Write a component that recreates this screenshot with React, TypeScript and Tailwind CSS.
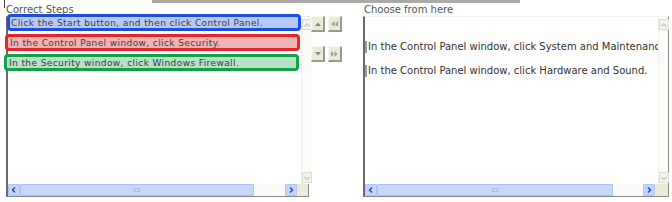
import React from "react";

const Chev = ({ dir, color }: { dir: "up" | "down" | "left" | "right"; color: string }) => {
  const d =
    dir === "up"
      ? "M1.5 5.5 L4 3 L6.5 5.5"
      : dir === "down"
      ? "M1.5 3 L4 5.5 L6.5 3"
      : dir === "left"
      ? "M5 1.5 L2.5 4 L5 6.5"
      : "M3 1.5 L5.5 4 L3 6.5";
  return (
    <svg width="8" height="8" viewBox="0 0 8 8">
      <path d={d} fill="none" stroke={color} strokeWidth="1.4" />
    </svg>
  );
};

const VScroll = () => (
  <div className="w-[10px] flex flex-col justify-between bg-[#fbfbf7] border-l border-[#eeeeea] pt-[2px] pb-[1px]">
    <div className="h-[11px] w-[10px] border border-[#dcdcd4] bg-[#f4f4ee] flex items-center justify-center">
      <Chev dir="up" color="#c4c4c4" />
    </div>
    <div className="h-[11px] w-[10px] border border-[#dcdcd4] bg-[#f4f4ee] flex items-center justify-center">
      <Chev dir="down" color="#c4c4c4" />
    </div>
  </div>
);

const HScroll = ({ thumb, track }: { thumb: number; track: number }) => (
  <div className="h-[12px] flex items-stretch bg-[#fafaf6]">
    <div className="w-[12px] bg-[#c2d4fb] border border-[#b0c4f4] rounded-[1px] flex items-center justify-center">
      <Chev dir="left" color="#2048a8" />
    </div>
    <div className="relative bg-[#c8d8fc] border border-[#aec2f2] rounded-[1px] flex items-center justify-center" style={{ width: thumb }}>
      <div className="w-[6px] h-[4px] border border-[#a8bcec]" />
    </div>
    <div className="bg-[#fafaf8]" style={{ width: track }} />
    <div className="w-[12px] bg-[#c2d4fb] border border-[#b0c4f4] rounded-[1px] flex items-center justify-center">
      <Chev dir="right" color="#2048a8" />
    </div>
    <div className="flex-1 bg-[#ecead8]" />
  </div>
);

const SideBtn = ({ children }: { children: React.ReactNode }) => (
  <div className="w-[14px] h-[16px] bg-[#ecead8] border-t border-l border-[#f8f8f2] border-r-2 border-b-2 border-r-[#9a9a90] border-b-[#9a9a90] flex items-center justify-center">
    {children}
  </div>
);

const items = [
  { text: "Click the Start button, and then click Control Panel.", border: "border-[#1d4fe8]", bg: "bg-[#b8c9f3]", ml: "ml-[-1px]", w: "w-[294px]", pl: "pl-[1px]" },
  { text: "In the Control Panel window, click Security.", border: "border-[#e2262b]", bg: "bg-[#f1b3b3]", ml: "ml-[-3px]", w: "w-[295px]", pl: "pl-[2px]" },
  { text: "In the Security window, click Windows Firewall.", border: "border-[#17a04a]", bg: "bg-[#b3e2c5]", ml: "ml-[-4px]", w: "w-[295px]", pl: "pl-[2px]" },
];

export default function App() {
  return (
    <div className="relative w-[672px] h-[202px] bg-white overflow-hidden font-['DejaVu_Sans',sans-serif] text-[#3a3a3a]">
      <div className="absolute left-[4px] top-0 w-px h-[8px] bg-[#444]" />
      <div className="h-[4px] flex">
        <div className="ml-[152px] w-[368px] h-[3px] bg-[#a9a9a9]" />
      </div>
      <div className="flex">
        {/* Left column */}
        <div className="ml-[6px] w-[303px] flex flex-col">
          <div className="h-[12px] text-[10px] leading-[12px] text-[#555]">Correct Steps</div>
          <div className="h-[181px] flex flex-col border-l-2 border-l-[#6a6a6a] border-r border-r-[#8a8a8a] border-b border-b-[#8a8a8a] border-t border-t-[#f0f0f0]">
            <div className="flex-1 flex min-h-0">
              <div className="flex-1 flex flex-col gap-[3px] mt-[-3px]">
                {items.map((it) => (
                  <div key={it.text} className={`${it.ml} ${it.w} h-[17px] border-[3px] ${it.border} rounded-[4px] ${it.bg} ${it.pl} flex items-center`}>
                    <span className="text-[9px] leading-[11px] pt-[1px] text-[#3d3d3d] tracking-[0.4px] whitespace-nowrap">{it.text}</span>
                  </div>
                ))}
              </div>
              <VScroll />
            </div>
            <HScroll thumb={234} track={31} />
          </div>
        </div>

        {/* Middle buttons */}
        <div className="ml-[2px] w-[52px] pt-[12px] flex flex-col gap-[14px]">
          <div className="flex gap-[3px]">
            <SideBtn>
              <svg width="6" height="4" viewBox="0 0 6 4"><path d="M0 4 L3 0.5 L6 4 Z" fill="#8a8a84" /></svg>
            </SideBtn>
            <SideBtn>
              <svg width="7" height="6" viewBox="0 0 7 6"><path d="M3.5 0 L0.5 3 L3.5 6 Z M7 0 L4 3 L7 6 Z" fill="#a0a09a" /></svg>
            </SideBtn>
          </div>
          <div className="flex gap-[3px]">
            <SideBtn>
              <svg width="6" height="4" viewBox="0 0 6 4"><path d="M0 0 L3 3.5 L6 0 Z" fill="#8a8a84" /></svg>
            </SideBtn>
            <SideBtn>
              <svg width="7" height="6" viewBox="0 0 7 6"><path d="M0 0 L3 3 L0 6 Z M3.5 0 L6.5 3 L3.5 6 Z" fill="#a0a09a" /></svg>
            </SideBtn>
          </div>
        </div>

        {/* Right column */}
        <div className="w-[306px] flex flex-col">
          <div className="h-[12px] text-[10px] leading-[12px] text-[#555] ml-[1px]">Choose from here</div>
          <div className="h-[181px] flex flex-col border-l-2 border-l-[#6a6a6a] border-r border-r-[#8a8a8a] border-b border-b-[#8a8a8a] border-t border-t-[#f4f4f4]">
            <div className="flex-1 flex min-h-0">
              <div className="flex-1 min-w-0 flex flex-col gap-[12px] pt-[24px] overflow-hidden">
                {["In the Control Panel window, click System and Maintenance.", "In the Control Panel window, click Hardware and Sound."].map((t) => (
                  <div key={t} className="h-[12px] flex items-center">
                    <div className="shrink-0 w-[2px] h-[12px] bg-[#9a9a9a] mr-[1px]" />
                    <span className="shrink-0 text-[10px] leading-[12px] text-[#333] whitespace-nowrap">{t}</span>
                  </div>
                ))}
              </div>
              <VScroll />
            </div>
            <HScroll thumb={236} track={30} />
          </div>
        </div>
      </div>
    </div>
  );
}
